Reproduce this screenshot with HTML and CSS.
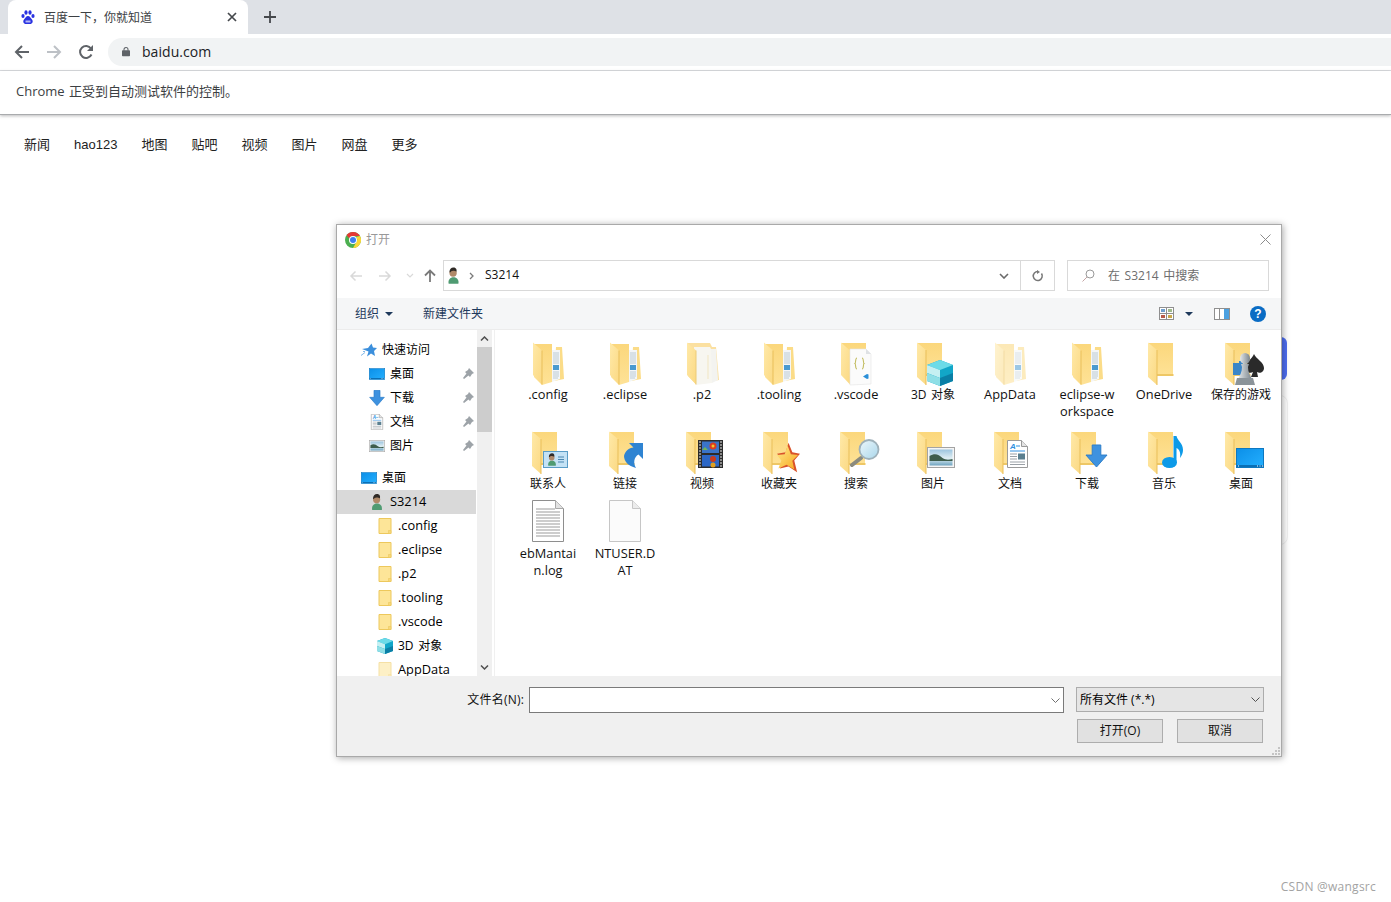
FILE: index.html
```html
<!DOCTYPE html>
<html lang="zh-CN">
<head>
<meta charset="utf-8">
<title>百度一下，你就知道</title>
<link rel="stylesheet" href="styles.css">
</head>
<body>
<svg class="defs" width="0" height="0" aria-hidden="true">
  <defs>
    <linearGradient id="gFolder" x1="0" y1="0" x2="0" y2="1"><stop offset="0" stop-color="#fbd77c"/><stop offset="1" stop-color="#fee296"/></linearGradient>
    <linearGradient id="gFlap" x1="0" y1="0" x2="1" y2="1"><stop offset="0" stop-color="#ffe9a8"/><stop offset="1" stop-color="#fbd983"/></linearGradient>
    <linearGradient id="gScreen" x1="0" y1="0" x2="1" y2="1"><stop offset="0" stop-color="#0b8fe8"/><stop offset="1" stop-color="#25b0ff"/></linearGradient>
    <linearGradient id="gSky" x1="0" y1="0" x2="0" y2="1"><stop offset="0" stop-color="#9cc4de"/><stop offset=".55" stop-color="#dfeef3"/><stop offset="1" stop-color="#6ea3c0"/></linearGradient>
    <linearGradient id="gStar" x1="0" y1="0" x2="1" y2="1"><stop offset="0" stop-color="#ffe98a"/><stop offset="1" stop-color="#f7a91f"/></linearGradient>
    <linearGradient id="gLens" x1="0" y1="0" x2="1" y2="1"><stop offset="0" stop-color="#eef8fc"/><stop offset="1" stop-color="#a9d6ea"/></linearGradient>
    <linearGradient id="gPawn" x1="0" y1="0" x2="1" y2="0"><stop offset="0" stop-color="#e4e8ea"/><stop offset="1" stop-color="#79838a"/></linearGradient>

    <symbol id="folder" viewBox="0 0 44 44" overflow="visible">
      <path d="M7 2h24v33H15l-8-2z" fill="url(#gFolder)"/>
      <path d="M15 33h16.500v2H15z" fill="#eec765"/>
      <path d="M6 1.500l9 7.500v35l-9-8z" fill="url(#gFlap)"/>
      <path d="M15 9v35" stroke="#e9bf5a" stroke-width="1"/>
    </symbol>
    <symbol id="folderdocs" viewBox="0 0 44 44" overflow="visible">
      <path d="M30 6h6l2 32-10 2z" fill="#fbdc88"/>
      <path d="M8 3h18v38l-10 3-8-8z" fill="url(#gFolder)"/>
      <path d="M26 9h8v29l-8 3z" fill="#f4f6f7"/>
      <path d="M27 12h6M27 14h6M27 16h6M27 18h6M27 20h6M27 22h6M27 31h6M27 33h6M27 35h6M27 37h5" stroke="#bccbd4" stroke-width="1"/>
      <path d="M27 24h6v5h-6z" fill="#4a9ad0"/>
      <path d="M7 1.500l9 8v34l-9-9.500z" fill="url(#gFlap)"/>
      <path d="M16 9.500v34" stroke="#e9bf5a"/>
    </symbol>
    <symbol id="folderpage" viewBox="0 0 44 44" overflow="visible">
      <path d="M8 2h22l2 4h4l3 33-23 4-8-8z" fill="#fbe0a0"/>
      <path d="M14 6h16l2 4v32l-16 2z" fill="#f7f6f0"/>
      <path d="M31 8h5l2 31-6 3z" fill="#f3f3f0"/>
      <path d="M28 14v24" stroke="#f1e6c3"/>
      <path d="M7 1.500l9 8v34l-9-9.500z" fill="url(#gFlap)"/>
      <path d="M16 9.500v34" stroke="#eccb78"/>
    </symbol>
    <symbol id="foldercode" viewBox="0 0 44 44" overflow="visible">
      <path d="M8 2h24v32H16l-8-2z" fill="url(#gFolder)"/>
      <path d="M7 1.500l9 8v34l-9-9.500z" fill="url(#gFlap)"/>
      <path d="M16 8h16l5 5v30l-21 1z" fill="#fbfbfb" stroke="#e4e4e4" stroke-width=".6"/>
      <path d="M32 8v5h5z" fill="#dfe2e5"/>
      <path d="M23 17c-2 0-1 5-2 5.500 1 .5 0 5.500 2 5.500M28 17c2 0 1 5 2 5.500-1 .5 0 5.500-2 5.500" fill="none" stroke="#c3bd62" stroke-width="1.100"/>
      <path d="M33 33l-4 2.500 4 2.500 1.500-.5v-4z" fill="#2a8fd8"/>
    </symbol>

    <symbol id="desktop" viewBox="0 0 28 20">
      <rect x=".5" y=".5" width="27" height="19" fill="url(#gScreen)" stroke="#0e78c0"/>
      <path d="M1 17h26v2H1z" fill="#0a6fb5"/>
      <path d="M2 18h1M21 18h1M23.500 18h1M26 18h1" stroke="#fff"/>
    </symbol>
    <symbol id="down" viewBox="0 0 24 24">
      <path d="M7.500.5h9V11H23L12 23.500 1 11h6.500z" fill="#3e92df" stroke="#2c7cc8"/>
    </symbol>
    <symbol id="music" viewBox="0 0 21 32">
      <ellipse cx="7.500" cy="26.500" rx="7.500" ry="5.500" fill="#0c9ae8"/>
      <path d="M11.500 0h3c1 5 6.500 7 6.500 14 0 3-1 5-3 8 1-6-1-9-3.500-10V27h-3z" fill="#0c9ae8"/>
    </symbol>
    <symbol id="doc" viewBox="0 0 21 28">
      <path d="M.5.500h14l6 6v21H.5z" fill="#fff" stroke="#9a9a9a"/>
      <path d="M14.500.500v6h6" fill="#e4e4e4" stroke="#9a9a9a"/>
      <text x="3" y="9" class="docmark">A</text>
      <path d="M9 6h4M3 11h15" stroke="#2f8fe0"/>
      <path d="M3 14h7M3 16.500h7M3 19h7M3 22h15M3 24.500h15" stroke="#9aa0a6"/>
      <rect x="11" y="13.500" width="7" height="6" fill="#5a7f8f"/>
    </symbol>
    <symbol id="picture" viewBox="0 0 28 21">
      <rect x=".5" y=".5" width="27" height="20" fill="#f5f5f5" stroke="#a3a3a3"/>
      <rect x="2.500" y="2.500" width="23" height="16" fill="url(#gSky)"/>
      <path d="M2.500 9c5-3 9-2 13 2 3 2 6 2 10 1v2H2.500z" fill="#3e5d4c"/>
    </symbol>
    <symbol id="magnifier" viewBox="0 0 30 29">
      <path d="M11 19L2 26" stroke="#8b8b7f" stroke-width="4" stroke-linecap="round"/>
      <circle cx="19" cy="10.500" r="9.500" fill="url(#gLens)" stroke="#9fb1ba" stroke-width="1.800"/>
    </symbol>
    <symbol id="star" viewBox="0 0 24 31">
      <path d="M12 0l4 10 8 1.500-6 7L21 31l-9-6-9 2 3-9-6-6.500 9-1.500z" fill="#d9522a"/>
      <path d="M11 3l3.500 9 7.500 1-6 6 2 9-8-5-8.500 4 3-8.500L0 13l8-1z" fill="url(#gStar)"/>
    </symbol>
    <symbol id="film" viewBox="0 0 25 28">
      <rect width="25" height="28" fill="#2b2b2b"/>
      <rect x="4" y="1.500" width="17" height="11.500" fill="#3a74c9"/>
      <rect x="4" y="15" width="17" height="11.500" fill="#2c67c6"/>
      <circle cx="15" cy="6" r="3.500" fill="#d93c22"/><circle cx="15" cy="6" r="1.500" fill="#f4c528"/>
      <circle cx="15" cy="19" r="3" fill="#c73a1e"/><circle cx="15" cy="25" r="2.500" fill="#e0a020"/>
      <path d="M4 10h6l-3-3z" fill="#6fb35a"/>
      <path d="M1 2h2M1 5h2M1 8h2M1 11h2M1 14h2M1 17h2M1 20h2M1 23h2M1 26h2M22 2h2M22 5h2M22 8h2M22 11h2M22 14h2M22 17h2M22 20h2M22 23h2M22 26h2" stroke="#e8e8e8" stroke-width="1.200"/>
    </symbol>
    <symbol id="linkarrow" viewBox="0 0 19 25">
      <path d="M5 0h14v16l-4.500-4.500C10 14 9 20 12 25 4 23 0 18 0 13 1 8 5 5 9.500 4.500z" fill="#2f84d2"/>
    </symbol>
    <symbol id="user" viewBox="0 0 16 20">
      <path d="M2 20c-1-5 2-8 6-8s7 3 6 8z" fill="#4f9b72"/>
      <circle cx="7.500" cy="7" r="4.500" fill="#b08968"/>
      <path d="M3 6c0-4 2-6 5-6 3.500 0 4.500 3 3.500 5.500C10 4 6 4 5 5c-.5 1-1.500 1.500-2 1z" fill="#2f2a26"/>
    </symbol>
    <symbol id="card" viewBox="0 0 25 17">
      <rect x=".5" y=".5" width="24" height="16" fill="#c4e2f5" stroke="#5a9cc6"/>
      <path d="M15 6h6M15 8.500h6M15 11h6" stroke="#4b87b0"/>
      <use href="#user" x="4" y="2" width="10" height="13"/>
    </symbol>
    <symbol id="cube" viewBox="0 0 26 26">
      <path d="M13 0l13 5v16l-13 5L0 21V5z" fill="#12a6c8"/>
      <path d="M13 0l13 5-13 5L0 5z" fill="#6cdbe8"/>
      <path d="M0 5l13 5v8L0 13z" fill="#c5f0f2"/>
      <path d="M0 13l13 5v8L0 21z" fill="#8fdfe6"/>
      <path d="M13 18l13-5v8l-13 5z" fill="#0a7fa6"/>
    </symbol>
    <symbol id="chess" viewBox="0 0 31 32">
      <path d="M0 10h6v-2h4v14H0z" fill="#3a86c8"/>
      <path d="M21 1c2 5 10 8 10 14 0 4-4 6-7 4l1 5h-7l2-5c-3 2-7 0-7-4 0-6 6-9 8-14z" fill="#2a2a2a"/>
      <ellipse cx="12" cy="5.500" rx="5" ry="5.500" fill="url(#gPawn)"/>
      <path d="M8 11h8l-1 3c0 5 2 8 4 12H5c2-4 4-7 4-12z" fill="url(#gPawn)"/>
      <path d="M4 25h16l2 7H2z" fill="#8b949a"/>
    </symbol>
    <symbol id="logfile" viewBox="0 0 32 42">
      <path d="M.5.500h23l8 8v33H.5z" fill="#fff" stroke="#8e8e8e"/>
      <path d="M23.500.500v8h8" fill="#e2e2e2" stroke="#a8a8a8"/>
      <path d="M4 9h19M4 12h24M4 15h24M4 18h24M4 21h24M4 24h24M4 27h24M4 30h24M4 33h24M4 36h24" stroke="#9b9b9b"/>
    </symbol>
    <symbol id="blankfile" viewBox="0 0 32 42">
      <path d="M.5.500h23l8 8v33H.5z" fill="#fbfbfb" stroke="#c6c6c6"/>
      <path d="M23.500.500v8h8" fill="#ececec" stroke="#c6c6c6"/>
    </symbol>
    <symbol id="treefolder" viewBox="0 0 13 16">
      <path d="M.5.500h12v15H.5z" fill="#fde598" stroke="#edc85c"/>
      <path d="M10 12.500h2.500v3H10z" fill="#f7d77a" stroke="#edc85c" stroke-width=".6"/>
    </symbol>
    <symbol id="pin" viewBox="0 0 12 12">
      <path d="M7 0l5 5-2 1-2 3-1.500-1.500L2 11 1 10l3.500-4.500L3 4l3-2z" fill="#9da3a8"/>
    </symbol>
    <symbol id="quickstar" viewBox="0 0 16 15">
      <path d="M10.500 1l1.500 4 4 .5-3 3 1 5-4-2.500-4 3 1.500-5L1 6.500l6-1z" fill="#3b8fdc"/>
      <path d="M0 13l4-3M2 9h2" stroke="#7fb8ea"/>
    </symbol>
  </defs>
</svg>

<header class="chrome">
  <div class="tabstrip">
    <div class="tab">
      <svg class="favicon" viewBox="0 0 14 14"><ellipse cx="2" cy="6" rx="1.600" ry="2" fill="#2932e1"/><ellipse cx="5" cy="2.500" rx="1.600" ry="2.200" fill="#2932e1"/><ellipse cx="9" cy="2.500" rx="1.600" ry="2.200" fill="#2932e1"/><ellipse cx="12" cy="6" rx="1.600" ry="2" fill="#2932e1"/><path d="M7 6c2 0 2.500 2 4 3.500 1.500 2 .5 4.500-2 4.500H5c-2.500 0-3.500-2.500-2-4.500C4.500 8 5 6 7 6z" fill="#2932e1"/><path d="M4.500 10.500h5v2h-5z" fill="#fff" opacity=".65"/></svg>
      <span class="tabtitle">百度一下，你就知道</span>
      <svg class="tabclose" viewBox="0 0 10 10"><path d="M1 1l8 8M9 1l-8 8" stroke="#45484c" stroke-width="1.700"/></svg>
    </div>
    <svg class="newtab" viewBox="0 0 12 12"><path d="M6 0v12M0 6h12" stroke="#45484c" stroke-width="1.800"/></svg>
  </div>
  <div class="toolbar">
    <svg class="navbtn" viewBox="0 0 16 16"><path d="M15 8H2M8 2L2 8l6 6" fill="none" stroke="#5f6368" stroke-width="2"/></svg>
    <svg class="navbtn" viewBox="0 0 16 16"><path d="M1 8h13M8 2l6 6-6 6" fill="none" stroke="#bdc1c6" stroke-width="2"/></svg>
    <svg class="navbtn" viewBox="0 0 16 16"><path d="M13.500 10.500A6 6 0 1 1 13 4.500" fill="none" stroke="#5f6368" stroke-width="2"/><path d="M15 1v6H9z" fill="#5f6368"/></svg>
    <div class="omnibox">
      <svg class="lock" viewBox="0 0 10 12"><path d="M2.500 5V3.500a2.500 2.500 0 0 1 5 0V5" fill="none" stroke="#5f6368" stroke-width="1.300"/><rect y="4.500" width="10" height="7.500" rx="1" fill="#5f6368"/></svg>
      <span class="url">baidu.com</span>
    </div>
  </div>
  <div class="infobar"><span class="infotext">Chrome 正受到自动测试软件的控制。</span></div>
</header>

<main class="page">
  <nav class="links">
    <a>新闻</a><a>hao123</a><a>地图</a><a>贴吧</a><a>视频</a><a>图片</a><a>网盘</a><a>更多</a>
  </nav>
  <div class="bluetab"></div>
  <div class="sidecard"></div>

  <section class="dialog">
    <div class="titlebar">
      <svg class="chromelogo" viewBox="0 0 16 16">
        <circle cx="8" cy="8" r="8" fill="#4caf50"/>
        <path d="M8 0a8 8 0 0 1 6.930 4H8a4 4 0 0 0-3.700 2.400L1.600 3.200A8 8 0 0 1 8 0z" fill="#e53935"/>
        <path d="M14.930 4A8 8 0 0 1 8 16l3.400-6A4 4 0 0 0 11 5z" fill="#fdd835"/>
        <circle cx="8" cy="8" r="4" fill="#fff"/><circle cx="8" cy="8" r="3" fill="#3d7ff0"/>
      </svg>
      <span class="dlgtitle">打开</span>
      <svg class="dlgclose" viewBox="0 0 11 11"><path d="M.5.500l10 10M10.500.500l-10 10" stroke="#8c8c8c"/></svg>
    </div>

    <div class="addrrow">
      <div class="addrnav">
        <svg class="anbtn" viewBox="0 0 14 12"><path d="M13 6H2M6.500 1.500L2 6l4.500 4.500" fill="none" stroke="#d9d9d9" stroke-width="1.500"/></svg>
        <svg class="anbtn" viewBox="0 0 14 12"><path d="M1 6h11M7.500 1.500L12 6l-4.500 4.500" fill="none" stroke="#d9d9d9" stroke-width="1.500"/></svg>
        <svg class="anchev" viewBox="0 0 8 5"><path d="M1 1l3 3 3-3" fill="none" stroke="#d9d9d9" stroke-width="1.200"/></svg>
        <svg class="anup" viewBox="0 0 12 13"><path d="M6 13V2M1 6.500L6 1.500l5 5" fill="none" stroke="#7a7a7a" stroke-width="1.800"/></svg>
      </div>
      <div class="addrbox">
        <svg class="addruser"><use href="#user"/></svg>
        <svg class="crumbsep" viewBox="0 0 5 8"><path d="M1 1l3 3-3 3" fill="none" stroke="#7a7a7a" stroke-width="1.300"/></svg>
        <span class="crumb">S3214</span>
        <svg class="addrchev" viewBox="0 0 10 6"><path d="M1 1l4 4 4-4" fill="none" stroke="#6a6a6a" stroke-width="1.600"/></svg>
        <span class="addrrefresh"><svg class="refreshico" viewBox="0 0 12 12"><path d="M9.500 3.500A4.500 4.500 0 1 1 6 1.500" fill="none" stroke="#777" stroke-width="1.500"/><path d="M5 0l3 2-3 2z" fill="#777"/></svg></span>
      </div>
      <div class="searchbox">
        <svg class="searchico" viewBox="0 0 13 13"><circle cx="8" cy="5" r="4" fill="none" stroke="#9a9a9a"/><path d="M5 8l-4.500 4.500" stroke="#c4a4a4"/></svg>
        <span class="searchtext">在 S3214 中搜索</span>
      </div>
    </div>

    <div class="cmdbar">
      <span class="cmd">组织</span><i class="caret"></i>
      <span class="cmd cmdnew">新建文件夹</span>
      <span class="cmdspacer"></span>
      <svg class="viewico" viewBox="0 0 15 13"><rect x=".5" y=".5" width="14" height="12" fill="#fff" stroke="#8f8f8f"/><path d="M7.500 0v13M0 6.500h15" stroke="#8f8f8f"/><path d="M2 2h4v3H2z" fill="#6f9fcf"/><path d="M9 2h4v3H9z" fill="#9fb98a"/><path d="M2 8h4v3H2z" fill="#b85c4a"/><path d="M9 8h4v3H9z" fill="#c8a84a"/></svg>
      <i class="caret caretview"></i>
      <svg class="paneico" viewBox="0 0 16 12"><rect x=".5" y=".5" width="15" height="11" fill="#fff" stroke="#8f8f8f"/><path d="M10 1h5v10h-5z" fill="#4ba0e0"/><path d="M5.500 1v10" stroke="#8f8f8f"/></svg>
      <span class="help">?</span>
    </div>

    <div class="dlgbody">
      <div class="tree">
        <div class="treerow lv0"><svg class="ti"><use href="#quickstar"/></svg><span class="zh">快速访问</span></div>
        <div class="treerow lv1"><svg class="ti"><use href="#desktop"/></svg><span class="zh">桌面</span><svg class="pin"><use href="#pin"/></svg></div>
        <div class="treerow lv1"><svg class="ti"><use href="#down"/></svg><span class="zh">下载</span><svg class="pin"><use href="#pin"/></svg></div>
        <div class="treerow lv1"><svg class="ti"><use href="#doc"/></svg><span class="zh">文档</span><svg class="pin"><use href="#pin"/></svg></div>
        <div class="treerow lv1"><svg class="ti"><use href="#picture"/></svg><span class="zh">图片</span><svg class="pin"><use href="#pin"/></svg></div>
        <div class="treerow lv0 section"><svg class="ti"><use href="#desktop"/></svg><span class="zh">桌面</span></div>
        <div class="treerow lv1 selected"><svg class="ti"><use href="#user"/></svg><span class="en">S3214</span></div>
        <div class="treerow lv2"><svg class="ti"><use href="#treefolder"/></svg><span class="en">.config</span></div>
        <div class="treerow lv2"><svg class="ti"><use href="#treefolder"/></svg><span class="en">.eclipse</span></div>
        <div class="treerow lv2"><svg class="ti"><use href="#treefolder"/></svg><span class="en">.p2</span></div>
        <div class="treerow lv2"><svg class="ti"><use href="#treefolder"/></svg><span class="en">.tooling</span></div>
        <div class="treerow lv2"><svg class="ti"><use href="#treefolder"/></svg><span class="en">.vscode</span></div>
        <div class="treerow lv2"><svg class="ti"><use href="#cube"/></svg><span class="zh zhwide">3D 对象</span></div>
        <div class="treerow lv2"><svg class="ti faded"><use href="#treefolder"/></svg><span class="en">AppData</span></div>
      </div>
      <div class="scrollbar">
        <svg class="sarrow" viewBox="0 0 9 5"><path d="M1 4.500l3.500-3.500 3.500 3.500" fill="none" stroke="#505050" stroke-width="1.500"/></svg>
        <div class="thumb"></div>
        <span class="sspacer"></span>
        <svg class="sarrow" viewBox="0 0 9 5"><path d="M1 .5l3.500 3.500 3.500-3.500" fill="none" stroke="#505050" stroke-width="1.500"/></svg>
      </div>
      <div class="files">
        <figure class="file"><svg class="fi"><use href="#folderdocs"/></svg><figcaption>.config</figcaption></figure>
        <figure class="file"><svg class="fi"><use href="#folderdocs"/></svg><figcaption>.eclipse</figcaption></figure>
        <figure class="file"><svg class="fi"><use href="#folderpage"/></svg><figcaption>.p2</figcaption></figure>
        <figure class="file"><svg class="fi"><use href="#folderdocs"/></svg><figcaption>.tooling</figcaption></figure>
        <figure class="file"><svg class="fi"><use href="#foldercode"/></svg><figcaption>.vscode</figcaption></figure>
        <figure class="file"><svg class="fi"><use href="#folder"/><use href="#cube" x="16" y="19" width="26" height="26"/></svg><figcaption class="mixed zhwide">3D 对象</figcaption></figure>
        <figure class="file"><svg class="fi faded"><use href="#folderdocs"/></svg><figcaption>AppData</figcaption></figure>
        <figure class="file"><svg class="fi"><use href="#folderdocs"/></svg><figcaption>eclipse-w<br>orkspace</figcaption></figure>
        <figure class="file"><svg class="fi"><use href="#folder"/></svg><figcaption>OneDrive</figcaption></figure>
        <figure class="file"><svg class="fi"><use href="#folder"/><use href="#chess" x="14" y="12" width="31" height="32"/></svg><figcaption class="mixed">保存的游戏</figcaption></figure>

        <figure class="file"><svg class="fi"><use href="#folder"/><use href="#card" x="17" y="21" width="25" height="17"/></svg><figcaption class="mixed">联系人</figcaption></figure>
        <figure class="file"><svg class="fi"><use href="#folder"/><use href="#linkarrow" x="21" y="13" width="19" height="25"/></svg><figcaption class="mixed">链接</figcaption></figure>
        <figure class="file"><svg class="fi"><use href="#folder"/><use href="#film" x="18" y="10" width="25" height="28"/></svg><figcaption class="mixed">视频</figcaption></figure>
        <figure class="file"><svg class="fi"><use href="#folder"/><use href="#star" x="20" y="12" width="23" height="31"/></svg><figcaption class="mixed">收藏夹</figcaption></figure>
        <figure class="file"><svg class="fi"><use href="#folder"/><use href="#magnifier" x="16" y="9" width="30" height="29"/></svg><figcaption class="mixed">搜索</figcaption></figure>
        <figure class="file"><svg class="fi"><use href="#folder"/><use href="#picture" x="16" y="17" width="28" height="21"/></svg><figcaption class="mixed">图片</figcaption></figure>
        <figure class="file"><svg class="fi"><use href="#folder"/><use href="#doc" x="19" y="10" width="21" height="28"/></svg><figcaption class="mixed">文档</figcaption></figure>
        <figure class="file"><svg class="fi"><use href="#folder"/><use href="#down" x="20" y="14" width="23" height="24"/></svg><figcaption class="mixed">下载</figcaption></figure>
        <figure class="file"><svg class="fi"><use href="#folder"/><use href="#music" x="20" y="6" width="21" height="32"/></svg><figcaption class="mixed">音乐</figcaption></figure>
        <figure class="file"><svg class="fi"><use href="#folder"/><use href="#desktop" x="17" y="18" width="28" height="20"/></svg><figcaption class="mixed">桌面</figcaption></figure>

        <figure class="file plain"><svg class="fi"><use href="#logfile" x="6" y="1" width="32" height="42"/></svg><figcaption>ebMantai<br>n.log</figcaption></figure>
        <figure class="file plain"><svg class="fi"><use href="#blankfile" x="6" y="1" width="32" height="42"/></svg><figcaption>NTUSER.D<br>AT</figcaption></figure>
      </div>
    </div>

    <div class="dlgfoot">
      <div class="footrow">
        <label class="fnlabel">文件名(N):</label>
        <div class="fninput"><svg class="smallchev" viewBox="0 0 9 5"><path d="M.5.500l4 4 4-4" fill="none" stroke="#707070"/></svg></div>
        <div class="filter"><span class="filtertext">所有文件 (*.*)</span><svg class="smallchev" viewBox="0 0 9 5"><path d="M.5.500l4 4 4-4" fill="none" stroke="#505050"/></svg></div>
      </div>
      <div class="footbtns">
        <button class="btn">打开(O)</button>
        <button class="btn">取消</button>
      </div>
      <svg class="grip" viewBox="0 0 8 8"><path d="M6 0h2v2H6zM3 3h2v2H3zM6 3h2v2H6zM0 6h2v2H0zM3 6h2v2H3zM6 6h2v2H6z" fill="#c4c4c4"/></svg>
    </div>
  </section>
</main>

<div class="watermark">CSDN @wangsrc</div>
</body>
</html>
```

FILE: styles.css
```css
* { box-sizing: border-box; }
html, body { margin: 0; padding: 0; }
body {
  width: 1391px;
  height: 902px;
  overflow: hidden;
  position: relative;
  background: #fff;
  color: #000;
  font-family: "Open Sans", "Noto Sans CJK SC", sans-serif;
  font-size: 13px;
}
.defs { position: absolute; }
.docmark { font: italic bold 8px "Liberation Sans", sans-serif; fill: #2f8fe0; }

/* browser chrome */
.tabstrip { height: 34px; background: #dee1e6; display: flex; align-items: center; padding-left: 8px; }
.tab {
  width: 240px; height: 34px; background: #fff; border-radius: 8px 8px 0 0;
  display: flex; align-items: center; padding: 0 11px 0 13px; align-self: flex-end;
}
.favicon { width: 14px; height: 14px; flex: none; }
.tabtitle { margin-left: 9px; font-size: 12px; color: #3c4043; flex: 1; }
.tabclose { width: 10px; height: 10px; flex: none; }
.newtab { width: 12px; height: 12px; margin-left: 16px; }
.toolbar { height: 37px; display: flex; align-items: center; padding: 0 0 0 14px; border-bottom: 1px solid #dadce0; background: #fff; }
.navbtn { width: 16px; height: 16px; margin-right: 16px; flex: none; }
.omnibox {
  flex: 1; height: 28px; margin-left: -2px; margin-top: -1px;
  background: #f1f3f4; border-radius: 14px 0 0 14px;
  display: flex; align-items: center; padding-left: 14px;
}
.lock { width: 8px; height: 11px; }
.url { margin-left: 12px; font-size: 14px; color: #202124; letter-spacing: .05px; }
.infobar {
  height: 44px; padding: 0 0 4px 16px; display: flex; align-items: center;
  color: #3c4043; background: #fff;
  border-bottom: 1px solid #a9abad;
  box-shadow: 0 1px 3px rgba(60,64,67,.35);
  position: relative;
}
.infotext { word-spacing: 1px; }

/* page */
.page { height: 787px; }
.links { display: flex; gap: 24px; padding: 21px 0 0 24px; font-family: "Liberation Sans", "Noto Sans CJK SC", sans-serif; color: #222; line-height: 18px; }
.bluetab { position: absolute; left: 1270px; top: 337px; width: 17px; height: 43px; background: #4e6ef2; border-radius: 6px; }
.sidecard { position: absolute; left: 1200px; top: 395px; width: 88px; height: 150px; border: 1px solid #f1f1f1; border-radius: 8px; }

/* dialog */
.dialog {
  position: absolute; left: 336px; top: 224px; width: 946px; height: 533px;
  background: #fff; border: 1px solid #a9a9a9;
  box-shadow: 1px 1px 7px rgba(0,0,0,.35);
  display: flex; flex-direction: column;
}
.titlebar { height: 29px; display: flex; align-items: center; padding: 0 9px 0 8px; flex: none; }
.chromelogo { width: 16px; height: 16px; }
.dlgtitle { margin-left: 5px; padding-bottom: 2px; font-size: 12px; color: #999; flex: 1; }
.dlgclose { width: 11px; height: 11px; margin-right: 1px; }

.addrrow { height: 31px; margin-top: 6px; display: flex; flex: none; }
.addrnav { width: 106px; display: flex; align-items: center; padding-left: 12px; }
.anbtn { width: 14px; height: 12px; margin-right: 15px; flex: none; }
.anchev { width: 8px; height: 5px; margin-left: -1px; margin-right: 10px; flex: none; }
.anup { width: 12px; height: 13px; flex: none; }
.addrbox { width: 612px; border: 1px solid #d9d9d9; display: flex; align-items: center; padding-left: 3px; }
.addruser { width: 13px; height: 17px; flex: none; }
.crumbsep { width: 5px; height: 8px; margin-left: 9px; }
.crumb { margin-left: 11px; padding-bottom: 2px; font-size: 12px; flex: 1; color: #111; }
.addrchev { width: 10px; height: 6px; margin-right: 11px; }
.addrrefresh { width: 34px; height: 100%; border-left: 1px solid #d9d9d9; display: flex; align-items: center; justify-content: center; }
.refreshico { width: 12px; height: 12px; }
.searchbox {
  width: 202px; margin-left: 12px; border: 1px solid #d9d9d9; display: flex; align-items: center;
  padding-left: 14px; gap: 13px; font-size: 12px; color: #6d6d6d;
}
.searchtext { padding-bottom: 2px; word-spacing: 1.500px; }
.searchico { width: 13px; height: 13px; }

.cmdbar {
  height: 32px; margin-top: 7px; background: #f5f6f7; border-bottom: 1px solid #ececec;
  display: flex; align-items: center; padding-left: 18px; flex: none; color: #1e395b; font-size: 12px;
}
.cmd { padding-bottom: 2px; }
.caret { width: 0; height: 0; border: 4px solid transparent; border-top: 4px solid #1e395b; border-bottom: 0; margin-left: 6px; }
.cmdnew { margin-left: 30px; }
.cmdspacer { flex: 1; }
.viewico { width: 15px; height: 13px; }
.caretview { margin-left: 11px; }
.paneico { width: 16px; height: 12px; margin-left: 21px; }
.help {
  width: 16px; height: 16px; border-radius: 50%; background: #0a6cc4; color: #fff;
  font: bold 12px/16px "Liberation Sans", sans-serif; text-align: center;
  margin-left: 20px; margin-right: 15px;
}

.dlgbody { height: 346px; display: flex; flex: none; overflow: hidden; }
.tree { width: 140px; padding-top: 8px; flex: none; overflow: hidden; }
.treerow { height: 24px; display: flex; align-items: center; gap: 5px; white-space: nowrap; position: relative; }
.lv0 { padding-left: 24px; }
.lv1 { padding-left: 32px; }
.lv2 { padding-left: 40px; }
.section { margin-top: 8px; }
.selected { background: #d9d9d9; margin-right: 1px; }
.ti { width: 16px; height: 16px; flex: none; }
.zh { font-size: 12px; padding-bottom: 3px; }
.en { font-size: 12.800px; padding-bottom: 2px; }
.zhwide { word-spacing: 1.500px; }
.pin { position: absolute; right: 3px; top: 6px; width: 12px; height: 12px; }
.faded { opacity: .55; }
.scrollbar { width: 15px; background: #f0f0f0; display: flex; flex-direction: column; align-items: center; flex: none; padding: 6px 0; margin-right: 2px; }
.sarrow { width: 9px; height: 5px; flex: none; }
.thumb { width: 15px; height: 85px; background: #cdcdcd; margin-top: 6px; flex: none; }
.sspacer { flex: 1; }
.files {
  flex: 1; border-left: 1px solid #f0f0f0;
  display: grid; grid-template-columns: repeat(10, 77px); grid-template-rows: 89px 69px auto;
  padding: 11px 0 0 15px; align-content: start;
}
.file { margin: 0; display: flex; flex-direction: column; align-items: center; }
.fi { width: 44px; height: 44px; flex: none; overflow: visible; margin-right: 1px; }
.file figcaption { text-align: center; line-height: 17px; color: #111; white-space: nowrap; font-size: 12.800px; margin-top: 1px; margin-right: 1px; }
.file figcaption.mixed { font-size: 12px; margin-top: 1px; }
.file.plain figcaption { margin-top: 2px; }

.dlgfoot { flex: 1; background: #f0f0f0; position: relative; padding: 11px 17px 0 0; font-size: 12px; }
.footrow { display: flex; align-items: flex-start; }
.fnlabel { width: 192px; text-align: right; line-height: 26px; padding-right: 5px; color: #111; letter-spacing: .2px; }
.fninput { width: 535px; height: 26px; background: #fff; border: 1px solid #7a7a7a; display: flex; align-items: center; justify-content: flex-end; padding-right: 3px; }
.filter { width: 188px; height: 25px; margin-left: 12px; background: #e5e5e5; border: 1px solid #acacac; display: flex; align-items: center; justify-content: space-between; padding: 0 3px 0 3px; }
.filtertext { padding-bottom: 2px; }
.smallchev { width: 9px; height: 5px; }
.footbtns { display: flex; justify-content: flex-end; gap: 14px; margin-top: 6px; padding-right: 1px; }
.btn { width: 86px; height: 24px; background: #e1e1e1; border: 1px solid #adadad; font: inherit; color: #111; padding: 0 0 2px; }
.grip { position: absolute; right: 1px; bottom: 1px; width: 8px; height: 8px; }

.watermark { position: absolute; right: 15px; top: 879px; font-size: 12px; color: #a3a3a3; line-height: 16px; letter-spacing: .25px; }
```
